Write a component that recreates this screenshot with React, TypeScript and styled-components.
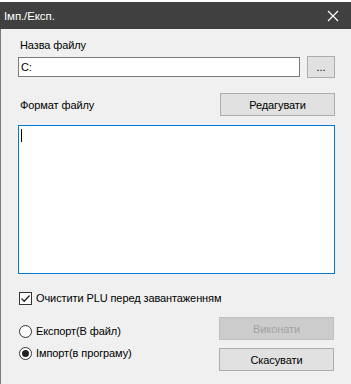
import React from "react";
import styled, { createGlobalStyle } from "styled-components";

const Global = createGlobalStyle`
  html, body { margin: 0; padding: 0; background: #ffffff; }
  body { font-family: "Liberation Sans", Arial, sans-serif; font-size: 11px; letter-spacing: -0.1px; color: #000; }
  * { box-sizing: border-box; }
`;

const Window = styled.div`
  margin-top: 2px;
  width: 351px;
  height: 382px;
  background: #f0f0f0;
  display: flex;
  flex-direction: column;
`;

const TitleBar = styled.div`
  height: 27px;
  background: #404040;
  color: #ffffff;
  display: flex;
  align-items: center;
  justify-content: space-between;
  padding: 0 12px 0 4px;
  font-size: 11.5px;
`;

const CloseIcon = styled.svg`
  width: 12px;
  height: 12px;
  display: block;
`;

const Body = styled.div`
  flex: 1;
  border-left: 1px solid #7a7a7a;
  padding: 8px 16px 0 17px;
  display: flex;
  flex-direction: column;
`;

const Label = styled.div`
  line-height: 16px;
  padding-left: 2px;
`;

const Row = styled.div<{ $mt?: number }>`
  display: flex;
  align-items: center;
  justify-content: space-between;
  margin-top: ${(p) => p.$mt ?? 0}px;
`;

const TextInput = styled.div`
  flex: 1;
  height: 20px;
  border: 1px solid #7a7a7a;
  background: #fff;
  line-height: 18px;
  padding-left: 2px;
  margin-right: 7px;
`;

const Button = styled.div<{ $w: number; $h: number; $disabled?: boolean }>`
  width: ${(p) => p.$w}px;
  height: ${(p) => p.$h}px;
  border: 1px solid ${(p) => (p.$disabled ? "#bfbfbf" : "#adadad")};
  background: ${(p) => (p.$disabled ? "#cccccc" : "#e1e1e1")};
  color: ${(p) => (p.$disabled ? "#a2a2a2" : "#000")};
  display: flex;
  align-items: center;
  justify-content: center;
  flex-shrink: 0;
`;

const TextArea = styled.div`
  margin-top: 9px;
  height: 149px;
  border: 1px solid #0078d7;
  background: #fff;
  padding: 3px 0 0 2px;
`;

const Caret = styled.div`
  width: 1px;
  height: 13px;
  background: #000;
`;

const CheckRow = styled.label`
  display: flex;
  align-items: center;
  margin-top: 17px;
  padding-left: 1px;
  height: 14px;
`;

const Box = styled.div`
  width: 13px;
  height: 13px;
  border: 1px solid #333;
  background: #fff;
  margin-right: 4px;
  display: flex;
  align-items: center;
  justify-content: center;
`;

const Bottom = styled.div`
  display: flex;
  justify-content: space-between;
  margin-top: 12px;
`;

const Radios = styled.div`
  display: flex;
  flex-direction: column;
  gap: 8px;
  padding-top: 7px;
  padding-left: 1px;
`;

const RadioRow = styled.div`
  display: flex;
  align-items: center;
  height: 14px;
`;

const RadioCircle = styled.div<{ $checked?: boolean }>`
  width: 13px;
  height: 13px;
  border-radius: 50%;
  border: 1px solid #333;
  background: #fff;
  margin-right: 4px;
  display: flex;
  align-items: center;
  justify-content: center;
  &::after {
    content: "";
    width: 7px;
    height: 7px;
    border-radius: 50%;
    background: ${(p) => (p.$checked ? "#222" : "transparent")};
  }
`;

const Buttons = styled.div`
  display: flex;
  flex-direction: column;
  gap: 8px;
  padding-right: 1px;
`;

export default function App() {
  return (
    <>
      <Global />
      <Window>
        <TitleBar>
          <span>Імп./Експ.</span>
          <CloseIcon viewBox="0 0 12 12">
            <path d="M1 1 L11 11 M11 1 L1 11" stroke="#fff" strokeWidth="1.2" fill="none" />
          </CloseIcon>
        </TitleBar>
        <Body>
          <Label>Назва файлу</Label>
          <Row $mt={3}>
            <TextInput>C:</TextInput>
            <Button $w={28} $h={22}>...</Button>
          </Row>
          <Row $mt={15}>
            <Label>Формат файлу</Label>
            <Button $w={115} $h={23}>Редагувати</Button>
          </Row>
          <TextArea>
            <Caret />
          </TextArea>
          <CheckRow>
            <Box>
              <svg width="11" height="11" viewBox="0 0 11 11">
                <path d="M1.5 5.5 L4.2 8.2 L9.5 2.5" stroke="#222" strokeWidth="1.3" fill="none" />
              </svg>
            </Box>
            Очистити PLU перед завантаженням
          </CheckRow>
          <Bottom>
            <Radios>
              <RadioRow>
                <RadioCircle />
                Експорт(В файл)
              </RadioRow>
              <RadioRow>
                <RadioCircle $checked />
                Імпорт(в програму)
              </RadioRow>
            </Radios>
            <Buttons>
              <Button $w={115} $h={23} $disabled>Виконати</Button>
              <Button $w={115} $h={23}>Скасувати</Button>
            </Buttons>
          </Bottom>
        </Body>
      </Window>
    </>
  );
}
